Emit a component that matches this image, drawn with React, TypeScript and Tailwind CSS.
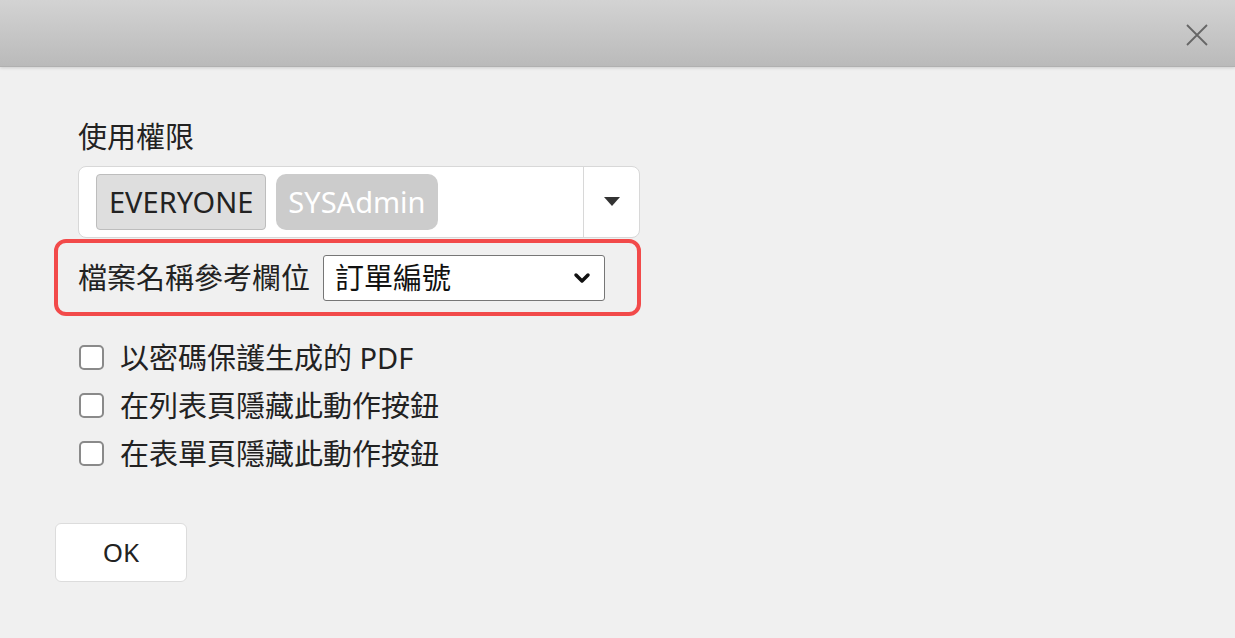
import { ChevronDown } from 'lucide-react'

const font = { fontFamily: '"Noto Sans", "Noto Sans CJK TC", sans-serif' }

function Checkbox({ label }: { label: string }) {
  return (
    <label className="flex items-center gap-[16px] h-[48px]">
      <span className="w-[25px] h-[25px] rounded-[5px] border-2 border-[#8a8a8a] bg-white shrink-0" />
      <span className="text-[29px] text-[#222] leading-none">{label}</span>
    </label>
  )
}

export default function App() {
  return (
    <div className="w-[1235px] h-[638px] bg-[#f0f0f0] flex flex-col overflow-hidden" style={font}>
      {/* Header */}
      <div className="h-[67px] shrink-0 bg-gradient-to-b from-[#d3d3d3] to-[#bababa] border-b border-[#b0b0b0] shadow-[0_1px_3px_rgba(0,0,0,0.15)] flex items-center justify-end pr-[26px] pt-[3px]">
        <svg width="24" height="24" viewBox="0 0 24 24" className="text-[#666]">
          <path d="M2 2 L22 22 M22 2 L2 22" stroke="currentColor" strokeWidth="1.8" fill="none" />
        </svg>
      </div>

      <div className="flex flex-col pl-[54px] pt-[52px]">
        {/* Permissions */}
        <div className="pl-[24px] w-[586px]">
          <div className="text-[29px] text-[#222] leading-[36px] h-[36px]">使用權限</div>
          <div className="mt-[11px] h-[72px] bg-white border border-[#d8d8d8] rounded-[8px] flex items-stretch">
            <div className="flex-1 flex items-center gap-[10px] pl-[17px]">
              <span className="h-[56px] px-[12px] flex items-center rounded-[4px] bg-[#dedede] border border-[#bdbdbd] text-[29px] text-[#222]">
                EVERYONE
              </span>
              <span className="h-[56px] px-[12px] flex items-center rounded-[10px] bg-[#cccccc] text-[29px] text-white">
                SYSAdmin
              </span>
            </div>
            <div className="w-[56px] border-l border-[#d8d8d8] flex items-center justify-center">
              <svg width="16" height="10" viewBox="0 0 16 10">
                <path d="M0 0 H16 L8 9 Z" fill="#333" />
              </svg>
            </div>
          </div>
        </div>

        {/* Highlighted row */}
        <div className="mt-[1px] w-[587px] h-[77px] border-4 border-[#f24a4a] rounded-[12px] flex items-center pl-[20px] gap-[13px]">
          <span className="text-[29px] text-[#222] leading-none">檔案名稱參考欄位</span>
          <div className="w-[282px] h-[46px] bg-white border border-[#767676] rounded-[3px] flex items-center justify-between pl-[11px] pr-[10px]">
            <span className="text-[29px] text-[#111] leading-none">訂單編號</span>
            <ChevronDown className="w-[24px] h-[24px] text-[#111]" strokeWidth={3.5} />
          </div>
        </div>

        {/* Checkboxes */}
        <div className="mt-[17px] pl-[25px] flex flex-col">
          <Checkbox label="以密碼保護生成的 PDF" />
          <Checkbox label="在列表頁隱藏此動作按鈕" />
          <Checkbox label="在表單頁隱藏此動作按鈕" />
        </div>

        {/* OK */}
        <div className="mt-[46px] pl-[1px]">
          <button className="w-[132px] h-[59px] bg-white border border-[#dcdcdc] rounded-[6px] text-[26px] text-[#222]">
            OK
          </button>
        </div>
      </div>
    </div>
  )
}
